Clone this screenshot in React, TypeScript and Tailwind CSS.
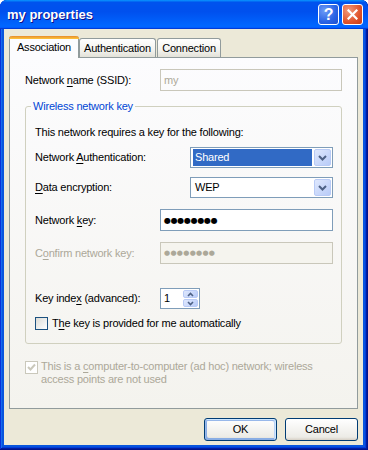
import React from "react";

const font = "font-['Liberation_Sans',Arial,sans-serif]";

function Acc({ children }: { children: React.ReactNode }) {
  return <span className="underline underline-offset-[2px] decoration-[1px]">{children}</span>;
}

function DropButton() {
  return (
    <div className="w-[17px] h-full rounded-[2px] border border-[#B9CBF6] bg-[linear-gradient(135deg,#dfe8fd,#b8cbf8)] flex items-center justify-center">
      <svg width="9" height="6" viewBox="0 0 9 6">
        <polyline points="1,1 4.5,4.5 8,1" fill="none" stroke="#4D6185" strokeWidth="2" />
      </svg>
    </div>
  );
}

function Combo({ value, selected }: { value: string; selected?: boolean }) {
  return (
    <div className="w-[143px] h-[21px] border border-[#7F9DB9] bg-white flex items-stretch py-[1px] pl-[2px] pr-[1px]">
      <div
        className={
          selected
            ? "flex-1 mr-[2px] bg-[#316AC5] text-white flex items-center pl-[2px]"
            : "flex-1 mr-[2px] flex items-center pl-[2px]"
        }
      >
        {value}
      </div>
      <DropButton />
    </div>
  );
}

function Tab({ label, active, w }: { label: string; active?: boolean; w: string }) {
  if (active) {
    return (
      <div className={`${w} h-[22px] -mb-[1px] relative z-10 bg-[#fcfcfe] border-x border-[#919B9C] rounded-t-[3px] flex flex-col`}>
        <div className="h-[3px] rounded-t-[3px] bg-[linear-gradient(to_bottom,#e68b2c,#ffc73c)] -mx-[1px]" />
        <div className="flex-1 flex items-center justify-center pb-[2px]">{label}</div>
      </div>
    );
  }
  return (
    <div className={`${w} h-[19px] border-x border-t border-[#919B9C] rounded-t-[3px] bg-[linear-gradient(to_bottom,#ffffff,#f3f3ef_60%,#e3e1d8)] flex items-center justify-center pt-[1px]`}>
      {label}
    </div>
  );
}

function Checkbox({ checked, disabled }: { checked?: boolean; disabled?: boolean }) {
  return (
    <div
      className={
        disabled
          ? "w-[13px] h-[13px] shrink-0 border border-[#CAC8BB] bg-white flex items-center justify-center"
          : "w-[13px] h-[13px] shrink-0 border border-[#1C5180] bg-[linear-gradient(135deg,#dcdcd7,#ffffff)]"
      }
    >
      {checked && (
        <svg width="9" height="9" viewBox="0 0 9 9">
          <polyline points="1,4 3.5,6.5 8,1.5" fill="none" stroke="#CAC8BB" strokeWidth="2" />
        </svg>
      )}
    </div>
  );
}

function XPButton({ label, def }: { label: string; def?: boolean }) {
  return (
    <div
      className={
        "w-[73px] h-[23px] rounded-[3px] border border-[#003C74] bg-[linear-gradient(180deg,#ffffff,#ecebe6_86%,#d6d0c5)] flex items-center justify-center " +
        (def
          ? "shadow-[inset_-1px_1px_#cee7ff,inset_1px_2px_#98b8ea,inset_-2px_2px_#bcd4f6,inset_1px_-1px_#89ade4,inset_2px_-2px_#89ade4]"
          : "")
      }
    >
      {label}
    </div>
  );
}

export default function App() {
  return (
    <div className={`${font} text-[11px] leading-[13px] tracking-[-0.2px] text-black w-[368px] h-[450px] flex flex-col bg-[#0855dd] rounded-t-[7px] overflow-hidden shadow-[inset_-1px_-1px_#00138c,inset_1px_1px_#0831d9,inset_-2px_-2px_#001ea0,inset_2px_2px_#166aee,inset_-3px_-3px_#003bda,inset_3px_3px_#0855dd]`}>
      {/* title bar */}
      <div className="h-[29px] shrink-0 flex items-center bg-[linear-gradient(180deg,#0997ff,#0053ee_8%,#0050ee_40%,#0066ff_88%,#0066ff_93%,#005bff_95%,#003dd7_96%,#003dd7)]">
        <span className="ml-[7px] text-[13px] tracking-normal font-bold text-white [text-shadow:1px_1px_#0f1089]">
          my properties
        </span>
        <div className="ml-auto mr-[5px] flex gap-[3px]">
          <div className="w-[21px] h-[21px] rounded-[3px] border border-white bg-[radial-gradient(circle_at_30%_30%,#6d9cf7,#2a63e4_60%,#1d4fd0)] flex items-center justify-center text-white font-bold text-[16px]">
            ?
          </div>
          <div className="w-[21px] h-[21px] rounded-[3px] border border-white bg-[radial-gradient(circle_at_30%_30%,#f29a7c,#e0542c_60%,#c63b16)] flex items-center justify-center">
            <svg width="11" height="11" viewBox="0 0 11 11">
              <path d="M1.5 1.5 L9.5 9.5 M9.5 1.5 L1.5 9.5" stroke="white" strokeWidth="2.2" strokeLinecap="square" />
            </svg>
          </div>
        </div>
      </div>

      {/* body */}
      <div className="flex-1 ml-[4px] mr-[5px] mb-[5px] bg-[#ECE9D8] px-[5px] flex flex-col">
        <div className="mt-[7px] flex items-end">
          <Tab label="Association" active w="w-[70px]" />
          <Tab label="Authentication" w="w-[77px]" />
          <div className="w-[1px]" />
          <Tab label="Connection" w="w-[64px]" />
        </div>

        {/* tab panel */}
        <div className="h-[352px] border border-[#919B9C] bg-[linear-gradient(to_bottom,#fcfcfe,#f4f3ee)] flex flex-col pl-[15px]">
          <div className="mt-[11px] h-[22px] flex items-center">
            <div className="w-[135px]">
              Network <Acc>n</Acc>ame (SSID):
            </div>
            <div className="w-[182px] h-full border border-[#C9C7BA] flex items-center pl-[3px] text-[#ACA899]">
              my
            </div>
          </div>

          <fieldset className="mt-[9px] w-[317px] border border-[#D0D0BF] rounded-[3px] pl-[9px] pr-[7px] pb-[13px] flex flex-col">
            <legend className="-ml-[4px] px-[2px] text-[#0046D5] leading-[13px]">Wireless network key</legend>
            <div className="mt-[13px] h-[13px]">This network requires a key for the following:</div>

            <div className="mt-[8px] h-[21px] flex items-center">
              <div className="w-[155px]">
                Network <Acc>A</Acc>uthentication:
              </div>
              <Combo value="Shared" selected />
            </div>

            <div className="mt-[9px] h-[21px] flex items-center">
              <div className="w-[155px]">
                <Acc>D</Acc>ata encryption:
              </div>
              <Combo value="WEP" />
            </div>

            <div className="mt-[11px] h-[22px] flex items-center">
              <div className="w-[125px]">
                Network <Acc>k</Acc>ey:
              </div>
              <div className="w-[173px] h-full border border-[#7F9DB9] bg-white flex items-center pl-[3px] font-['DejaVu_Sans',sans-serif] text-[8px] tracking-[-0.3px]">
                ●●●●●●●●
              </div>
            </div>

            <div className="mt-[11px] h-[22px] flex items-center">
              <div className="w-[125px] text-[#ACA899]">
                C<Acc>o</Acc>nfirm network key:
              </div>
              <div className="w-[173px] h-full border border-[#C9C7BA] bg-[#F5F4EE] flex items-center pl-[3px] text-[#ACA899] font-['DejaVu_Sans',sans-serif] text-[7px] tracking-[0.3px]">
                ●●●●●●●●
              </div>
            </div>

            <div className="mt-[24px] h-[21px] flex items-center">
              <div className="w-[125px]">
                Key inde<Acc>x</Acc> (advanced):
              </div>
              <div className="w-[40px] h-full border border-[#7F9DB9] bg-white flex items-stretch py-[1px] pr-[1px]">
                <div className="flex-1 pl-[3px] flex items-center">1</div>
                <div className="w-[15px] flex flex-col gap-[1px]">
                  <div className="flex-1 rounded-[2px] border border-[#B9CBF6] bg-[linear-gradient(135deg,#dfe8fd,#b8cbf8)] flex items-center justify-center">
                    <svg width="7" height="5" viewBox="0 0 7 5">
                      <polyline points="1,4 3.5,1.5 6,4" fill="none" stroke="#4D6185" strokeWidth="1.6" />
                    </svg>
                  </div>
                  <div className="flex-1 rounded-[2px] border border-[#B9CBF6] bg-[linear-gradient(135deg,#dfe8fd,#b8cbf8)] flex items-center justify-center">
                    <svg width="7" height="5" viewBox="0 0 7 5">
                      <polyline points="1,1 3.5,3.5 6,1" fill="none" stroke="#4D6185" strokeWidth="1.6" />
                    </svg>
                  </div>
                </div>
              </div>
            </div>

            <div className="mt-[8px] h-[13px] flex items-center">
              <Checkbox />
              <div className="ml-[4px]">
                T<Acc>h</Acc>e key is provided for me automatically
              </div>
            </div>
          </fieldset>

          <div className="mt-[16px] flex items-start">
            <div className="mt-[1px]">
              <Checkbox checked disabled />
            </div>
            <div className="ml-[3px] text-[#ACA899]">
              This is a <Acc>c</Acc>omputer-to-computer (ad hoc) network; wireless
              <br />
              access points are not used
            </div>
          </div>
        </div>

        <div className="mt-[9px] flex justify-end gap-[8px]">
          <XPButton label="OK" def />
          <XPButton label="Cancel" />
        </div>
      </div>
    </div>
  );
}
